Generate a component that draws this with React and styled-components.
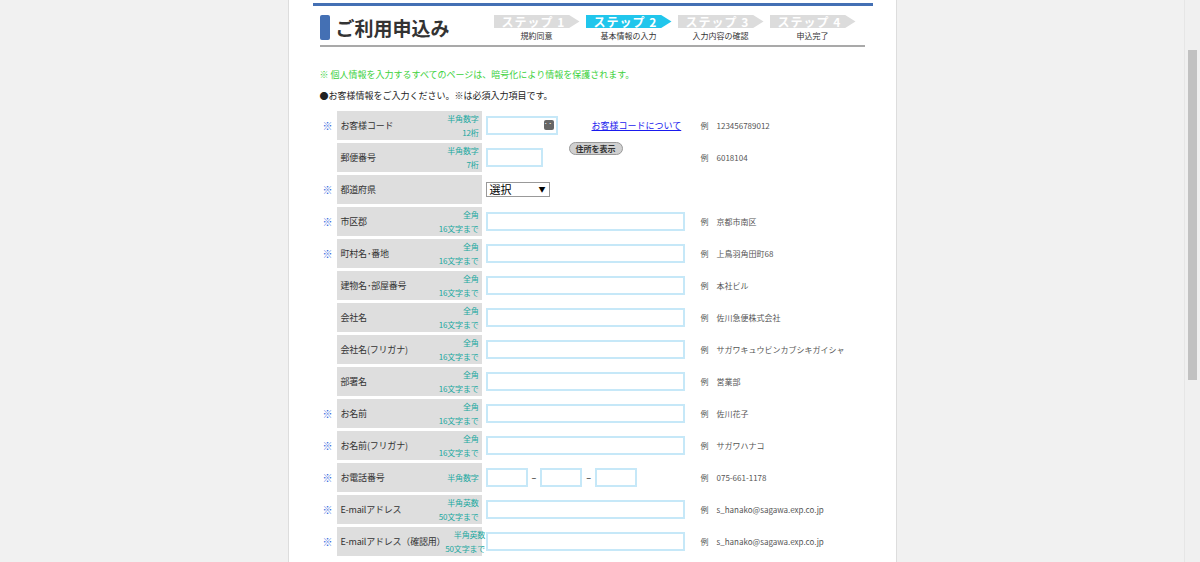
import React from "react";
import styled, { createGlobalStyle } from "styled-components";

const Global = createGlobalStyle`
  html, body { margin: 0; height: 100%; overflow: hidden; background: #f1f1f1; }
  body { font-family: "Noto Sans CJK JP", "Liberation Sans", sans-serif; }
`;

const Shell = styled.div`
  display: flex;
  height: 562px;
`;
const Page = styled.div`
  flex: 1;
  display: flex;
  justify-content: center;
`;
const Sheet = styled.div`
  width: 607px;
  background: #fff;
  border-left: 1px solid #ddd;
  border-right: 1px solid #ddd;
  padding: 3px 0 0 0;
`;
const Scroll = styled.div`
  width: 15px;
  background: #f0f0f0;
  border-left: 1px solid #e6e6e6;
  display: flex;
  flex-direction: column;
  align-items: center;
  & > div { width: 9px; height: 330px; background: #c1c1c1; margin-top: 50px; }
`;
const TopBar = styled.div`
  margin: 0 23px 0 24px;
  height: 3px;
  background: #4470b4;
`;
const Head = styled.div`
  margin: 9px 31px 0 31px;
  height: 30px;
  border-bottom: 2px solid #a9a9a9;
  display: flex;
  align-items: flex-start;
`;
const Title = styled.div`
  display: flex;
  align-items: center;
  gap: 6px;
  width: 174px;
  font-size: 19px;
  font-weight: bold;
  color: #333;
  line-height: 24px;
  &::before { content: ""; width: 10px; height: 25px; background: #4470b4; border-radius: 2px; }
`;
const Step = styled.div`
  width: 92px;
  display: flex;
  flex-direction: column;
  align-items: flex-start;
`;
const StepTag = styled.div`
  width: 78px;
  height: 13px;
  line-height: 13px;
  padding-left: 8px;
  font-size: 12px;
  font-weight: bold;
  letter-spacing: 1px;
  color: #fff;
  background: ${p => (p.$on ? "#21c6ec" : "#dcdcdc")};
  clip-path: polygon(0 0, 88% 0, 100% 50%, 88% 100%, 0 100%);
`;
const StepName = styled.div`
  width: 86px;
  text-align: center;
  font-size: 8px;
  color: #333;
  margin-top: 2px;
`;
const Notice = styled.p`
  margin: 22px 0 0 31px;
  font-size: 9px;
  line-height: 12px;
  color: #3cd13c;
`;
const Lead = styled.p`
  margin: 9px 0 9px 31px;
  font-size: 9px;
  line-height: 12px;
  color: #222;
`;
const Row = styled.div`
  display: grid;
  grid-template-columns: 16px 145px 223px 167px;
  align-items: center;
  margin-left: 32px;
  height: 29px;
  margin-bottom: 3px;
  font-size: 9px;
`;
const Mark = styled.span`
  color: #3366dd;
  font-size: 10px;
  padding-left: 2px;
`;
const Label = styled.div`
  background: #dedede;
  height: 100%;
  display: flex;
  justify-content: space-between;
  align-items: center;
  padding: 0 3px 0 4px;
  color: #333;
  font-size: 9px;
  white-space: nowrap;
  letter-spacing: -0.2px;
`;
const Hint = styled.div`
  color: #1aa8a0;
  font-size: 8px;
  text-align: right;
  line-height: 14px;
`;
const Field = styled.div`
  display: flex;
  align-items: center;
  gap: 4px;
  padding-left: 4px;
`;
const Box = styled.div`
  width: ${p => p.$w}px;
  height: 15px;
  border: 2px solid #c6e8f8;
  position: relative;
`;
const Dots = styled.span`
  position: absolute;
  right: 2px;
  top: 2px;
  width: 10px;
  height: 10px;
  background: #666;
  border-radius: 2px;
  color: #fff;
  font-size: 8px;
  line-height: 6px;
  text-align: center;
`;
const Select = styled.div`
  width: 56px;
  height: 13px;
  border: 1px solid #999;
  font-size: 11px;
  line-height: 13px;
  padding: 0 3px;
  display: flex;
  justify-content: space-between;
  & span { font-size: 7px; }
`;
const Link = styled.a`
  color: #1a1aee;
  text-decoration: underline;
  font-size: 9px;
  margin-left: 30px;
`;
const Btn = styled.span`
  margin-left: 22px;
  background: #d0d0d0;
  border: 1px solid #999;
  border-radius: 7px;
  padding: 0 6px;
  font-size: 8px;
  line-height: 11px;
  font-weight: bold;
  color: #333;
  align-self: flex-start;
  margin-top: -6px;
`;
const Ex = styled.div`
  color: #555;
  font-size: 8px;
  white-space: nowrap;
  margin-left: -4px;
`;

const rows = [
  { req: 1, label: "お客様コード", hint: ["半角数字", "12桁"], kind: "code", ex: "123456789012" },
  { label: "郵便番号", hint: ["半角数字", "7桁"], kind: "zip", ex: "6018104" },
  { req: 1, label: "都道府県", kind: "select" },
  { req: 1, label: "市区郡", hint: ["全角", "16文字まで"], ex: "京都市南区" },
  { req: 1, label: "町村名･番地", hint: ["全角", "16文字まで"], ex: "上鳥羽角田町68" },
  { label: "建物名･部屋番号", hint: ["全角", "16文字まで"], ex: "本社ビル" },
  { label: "会社名", hint: ["全角", "16文字まで"], ex: "佐川急便株式会社" },
  { label: "会社名(フリガナ)", hint: ["全角", "16文字まで"], ex: "サガワキュウビンカブシキガイシャ" },
  { label: "部署名", hint: ["全角", "16文字まで"], ex: "営業部" },
  { req: 1, label: "お名前", hint: ["全角", "16文字まで"], ex: "佐川花子" },
  { req: 1, label: "お名前(フリガナ)", hint: ["全角", "16文字まで"], ex: "サガワハナコ" },
  { req: 1, label: "お電話番号", hint: ["半角数字"], kind: "tel", ex: "075-661-1178" },
  { req: 1, label: "E-mailアドレス", hint: ["半角英数", "50文字まで"], ex: "s_hanako@sagawa.exp.co.jp" },
  { req: 1, label: "E-mailアドレス（確認用）", hint: ["半角英数", "50文字まで"], ex: "s_hanako@sagawa.exp.co.jp" },
];

function Input({ kind }) {
  if (kind === "code")
    return (
      <Field>
        <Box $w={68}><Dots>···</Dots></Box>
        <Link>お客様コードについて</Link>
      </Field>
    );
  if (kind === "zip")
    return (
      <Field>
        <Box $w={53} />
        <Btn>住所を表示</Btn>
      </Field>
    );
  if (kind === "select")
    return (
      <Field>
        <Select>選択<span>▼</span></Select>
      </Field>
    );
  if (kind === "tel")
    return (
      <Field>
        <Box $w={38} />–<Box $w={38} />–<Box $w={38} />
      </Field>
    );
  return (
    <Field>
      <Box $w={195} />
    </Field>
  );
}

const steps = [
  ["ステップ 1", "規約同意"],
  ["ステップ 2", "基本情報の入力"],
  ["ステップ 3", "入力内容の確認"],
  ["ステップ 4", "申込完了"],
];

export default function App() {
  return (
    <Shell>
      <Global />
      <Page>
        <Sheet>
          <TopBar />
          <Head>
            <Title>ご利用申込み</Title>
            {steps.map((s, i) => (
              <Step key={i}>
                <StepTag $on={i === 1}>{s[0]}</StepTag>
                <StepName>{s[1]}</StepName>
              </Step>
            ))}
          </Head>
          <Notice>※ 個人情報を入力するすべてのページは、暗号化により情報を保護されます。</Notice>
          <Lead>●お客様情報をご入力ください。※は必須入力項目です。</Lead>
          {rows.map((r, i) => (
            <Row key={i}>
              <Mark>{r.req ? "※" : ""}</Mark>
              <Label>
                <span>{r.label}</span>
                {r.hint && (
                  <Hint>
                    {r.hint.map((h, j) => (
                      <div key={j}>{h}</div>
                    ))}
                  </Hint>
                )}
              </Label>
              <Input kind={r.kind} />
              <Ex>{r.ex ? `例　${r.ex}` : ""}</Ex>
            </Row>
          ))}
        </Sheet>
      </Page>
      <Scroll><div /></Scroll>
    </Shell>
  );
}
